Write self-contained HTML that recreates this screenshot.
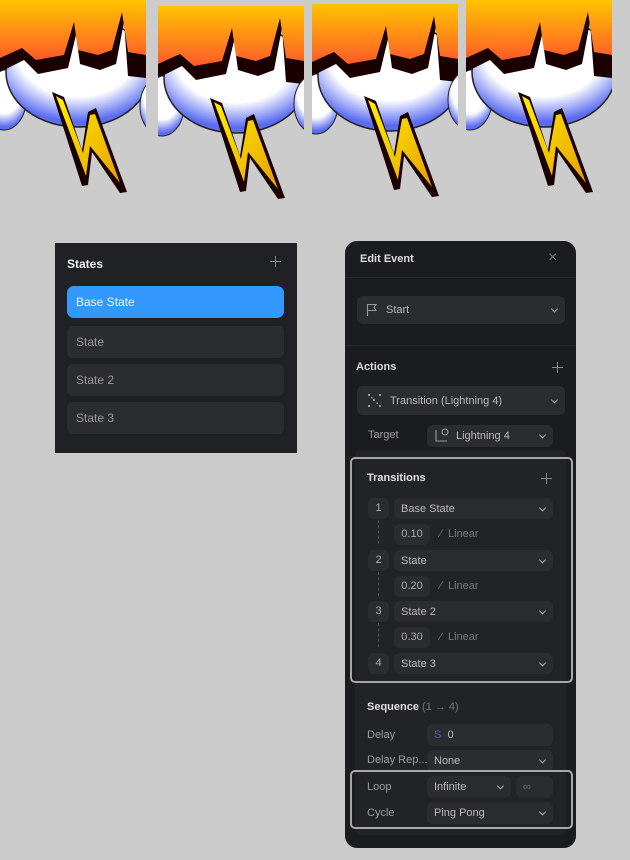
<!DOCTYPE html>
<html><head><meta charset="utf-8"><style>
*{margin:0;padding:0;box-sizing:border-box}
body{width:630px;height:860px;background:#cccccc;position:relative;overflow:hidden;font-family:"Liberation Sans",sans-serif;font-size:11px;color:#c8c8cc}
.a{position:absolute}
.f{position:absolute;background:#2b2c30;border-radius:6px;color:#b9b9be;padding-left:7px;display:flex;align-items:center;font-size:11px}
.chev{position:absolute;right:8px;top:50%;width:5px;height:5px;border-right:1.3px solid #aaa;border-bottom:1.3px solid #aaa;transform:translateY(-70%) rotate(45deg)}
.lbl{position:absolute;color:#9a9aa0;font-size:11px}
.num{position:absolute;background:#2b2c30;border-radius:6px;width:21px;height:21px;color:#aaa;text-align:center;line-height:21px;font-size:11px}
.dur{position:absolute;background:#2b2c30;border-radius:6px;width:36px;height:21px;color:#aaa;text-align:center;line-height:21px;font-size:11px}
.lin{position:absolute;color:#77777d;font-size:11px}
.dash{position:absolute;left:378px;width:0;height:24px;border-left:1px dashed #555}
.plus{position:absolute;width:11px;height:11px}
.plus:before{content:"";position:absolute;left:5px;top:0;width:1px;height:11px;background:#888}
.plus:after{content:"";position:absolute;left:0;top:5px;width:11px;height:1px;background:#888}
</style></head><body>
<svg class="a" style="left:0;top:0" width="630" height="230">
<defs>
<linearGradient id="og" x1="0" y1="0" x2="0" y2="1"><stop offset="0" stop-color="#ffc400"/><stop offset="1" stop-color="#ff5a2a"/></linearGradient>
<radialGradient id="cg" cx="0.5" cy="0.3" r="0.65"><stop offset="0.65" stop-color="#fff"/><stop offset="1" stop-color="#5a6cf0"/></radialGradient>
<linearGradient id="yg" x1="0" y1="0" x2="1" y2="1"><stop offset="0" stop-color="#fff000"/><stop offset="1" stop-color="#e8a000"/></linearGradient>
<g id="t">
<ellipse cx="4" cy="100" rx="22" ry="30" fill="url(#cg)" stroke="#222" stroke-width="1"/>
<ellipse cx="78" cy="72" rx="72" ry="55" fill="url(#cg)" stroke="#222" stroke-width="1.5"/>
<path d="M0,0H146V78L128,76L124,22L116,64L100,70L80,64L76,35L68,68L38,74L24,60L0,72Z" fill="#1a0000"/>
<path d="M0,0H146V55L128,52L122,12L112,50L98,55L78,50L74,22L64,55L36,60L22,48L0,58Z" fill="url(#og)"/>
<path d="M52,92L64,97L82,150L88,112L96,108L127,192L120,193L92,152L88,185L82,186Z" fill="#1a0000"/>
<path d="M56,96L63,100L83,153L90,115L95,114L120,183L90,146L86,176Z" fill="url(#yg)"/>
</g>
</defs>
<use href="#t" x="0"/><use href="#t" x="158" y="6"/><use href="#t" x="312" y="4"/><use href="#t" x="466" y="0"/>
<rect x="146" y="0" width="12" height="230" fill="#ccc"/><rect x="304" y="0" width="8" height="230" fill="#ccc"/><rect x="458" y="0" width="8" height="230" fill="#ccc"/><rect x="612" y="0" width="18" height="230" fill="#ccc"/>
</svg>

<div class="a" style="left:55px;top:243px;width:242px;height:210px;background:#202124"></div>
<div class="a" style="left:67px;top:257px;color:#eee;font-size:12px;font-weight:bold">States</div>
<div class="plus" style="left:270px;top:256px"></div>
<div class="f" style="left:67px;top:286px;width:217px;height:32px;background:#3399ff;color:#e8f4ff;font-size:12px;padding-left:9px;border-radius:7px">Base State</div>
<div class="f" style="left:67px;top:326px;width:217px;height:32px;font-size:12px;padding-left:9px;color:#999">State</div>
<div class="f" style="left:67px;top:364px;width:217px;height:32px;font-size:12px;padding-left:9px;color:#999">State 2</div>
<div class="f" style="left:67px;top:402px;width:217px;height:32px;font-size:12px;padding-left:9px;color:#999">State 3</div>

<div class="a" style="left:345px;top:241px;width:231px;height:607px;background:#1b1c20;border-radius:12px"></div>
<div class="a" style="left:360px;top:253px;color:#ddd;font-size:11px;font-weight:bold">Edit Event</div>
<div class="a" style="left:548px;top:249px;color:#777;font-size:16px">×</div>
<div class="a" style="left:345px;top:277px;width:231px;height:1px;background:#26272b"></div>
<div class="f" style="left:357px;top:296px;width:208px;height:28px;padding-left:29px">Start<span class="chev"></span></div>
<svg class="a" style="left:366px;top:303px" width="12" height="14"><path d="M1.5,13V1.5H10L8,4.5L10,7.5H1.5" fill="none" stroke="#999" stroke-width="1.1"/></svg>
<div class="a" style="left:345px;top:345px;width:231px;height:1px;background:#26272b"></div>
<div class="a" style="left:356px;top:361px;color:#ddd;font-weight:bold">Actions</div>
<div class="plus" style="left:552px;top:362px"></div>
<div class="f" style="left:357px;top:386px;width:208px;height:29px;padding-left:33px">Transition (Lightning 4)<span class="chev"></span></div>
<svg class="a" style="left:368px;top:394px" width="13" height="13" fill="#999"><rect x="0" y="0" width="2" height="2"/><rect x="11" y="0" width="2" height="2"/><rect x="0" y="11" width="2" height="2"/><rect x="11" y="11" width="2" height="2"/><rect x="5" y="5" width="2" height="2"/><rect x="3" y="3" width="1.5" height="1.5"/><rect x="8.5" y="8.5" width="1.5" height="1.5"/></svg>
<div class="lbl" style="left:368px;top:429px">Target</div>
<div class="f" style="left:427px;top:425px;width:126px;height:22px;padding-left:29px">Lightning 4<span class="chev"></span></div>
<svg class="a" style="left:434px;top:428px" width="16" height="16"><path d="M2,2V13H13" fill="none" stroke="#999" stroke-width="1.1"/><circle cx="11" cy="4" r="3" fill="none" stroke="#999" stroke-width="1.1"/></svg>

<div class="a" style="left:355px;top:450px;width:211px;height:385px;background:#222327;border-radius:6px"></div>
<div class="a" style="left:350px;top:457px;width:223px;height:226px;border:2.5px solid #a8a8a8;border-radius:5px"></div>
<div class="a" style="left:367px;top:472px;color:#e0e0e0;font-weight:bold">Transitions</div>
<div class="plus" style="left:541px;top:473px"></div>
<div class="num" style="left:368px;top:498px">1</div>
<div class="f" style="left:394px;top:498px;width:159px;height:21px">Base State<span class="chev"></span></div>
<div class="dash" style="top:520px"></div>
<div class="dur" style="left:394px;top:524px">0.10</div><div class="lin" style="left:440px;top:528px">⁄&nbsp;&nbsp;Linear</div>
<div class="num" style="left:368px;top:550px">2</div>
<div class="f" style="left:394px;top:550px;width:159px;height:21px">State<span class="chev"></span></div>
<div class="dash" style="top:572px"></div>
<div class="dur" style="left:394px;top:576px">0.20</div><div class="lin" style="left:440px;top:580px">⁄&nbsp;&nbsp;Linear</div>
<div class="num" style="left:368px;top:601px">3</div>
<div class="f" style="left:394px;top:601px;width:159px;height:21px">State 2<span class="chev"></span></div>
<div class="dash" style="top:623px"></div>
<div class="dur" style="left:394px;top:627px">0.30</div><div class="lin" style="left:440px;top:631px">⁄&nbsp;&nbsp;Linear</div>
<div class="num" style="left:368px;top:653px">4</div>
<div class="f" style="left:394px;top:653px;width:159px;height:21px">State 3<span class="chev"></span></div>

<div class="a" style="left:367px;top:701px;color:#e0e0e0;font-weight:bold">Sequence <span style="color:#777;font-weight:normal">(1 → 4)</span></div>
<div class="lbl" style="left:367px;top:729px">Delay</div>
<div class="f" style="left:427px;top:724px;width:126px;height:22px"><span style="color:#5555aa">S</span>&nbsp;&nbsp;0</div>
<div class="lbl" style="left:367px;top:754px">Delay Rep...</div>
<div class="f" style="left:427px;top:750px;width:126px;height:22px">None<span class="chev"></span></div>
<div class="a" style="left:350px;top:770px;width:223px;height:59px;border:2.5px solid #a8a8a8;border-radius:5px"></div>
<div class="lbl" style="left:367px;top:781px">Loop</div>
<div class="f" style="left:427px;top:776px;width:84px;height:22px">Infinite<span class="chev"></span></div>
<div class="f" style="left:516px;top:776px;width:37px;height:22px;color:#666">∞</div>
<div class="lbl" style="left:367px;top:807px">Cycle</div>
<div class="f" style="left:427px;top:802px;width:126px;height:22px">Ping Pong<span class="chev"></span></div>
</body></html>
